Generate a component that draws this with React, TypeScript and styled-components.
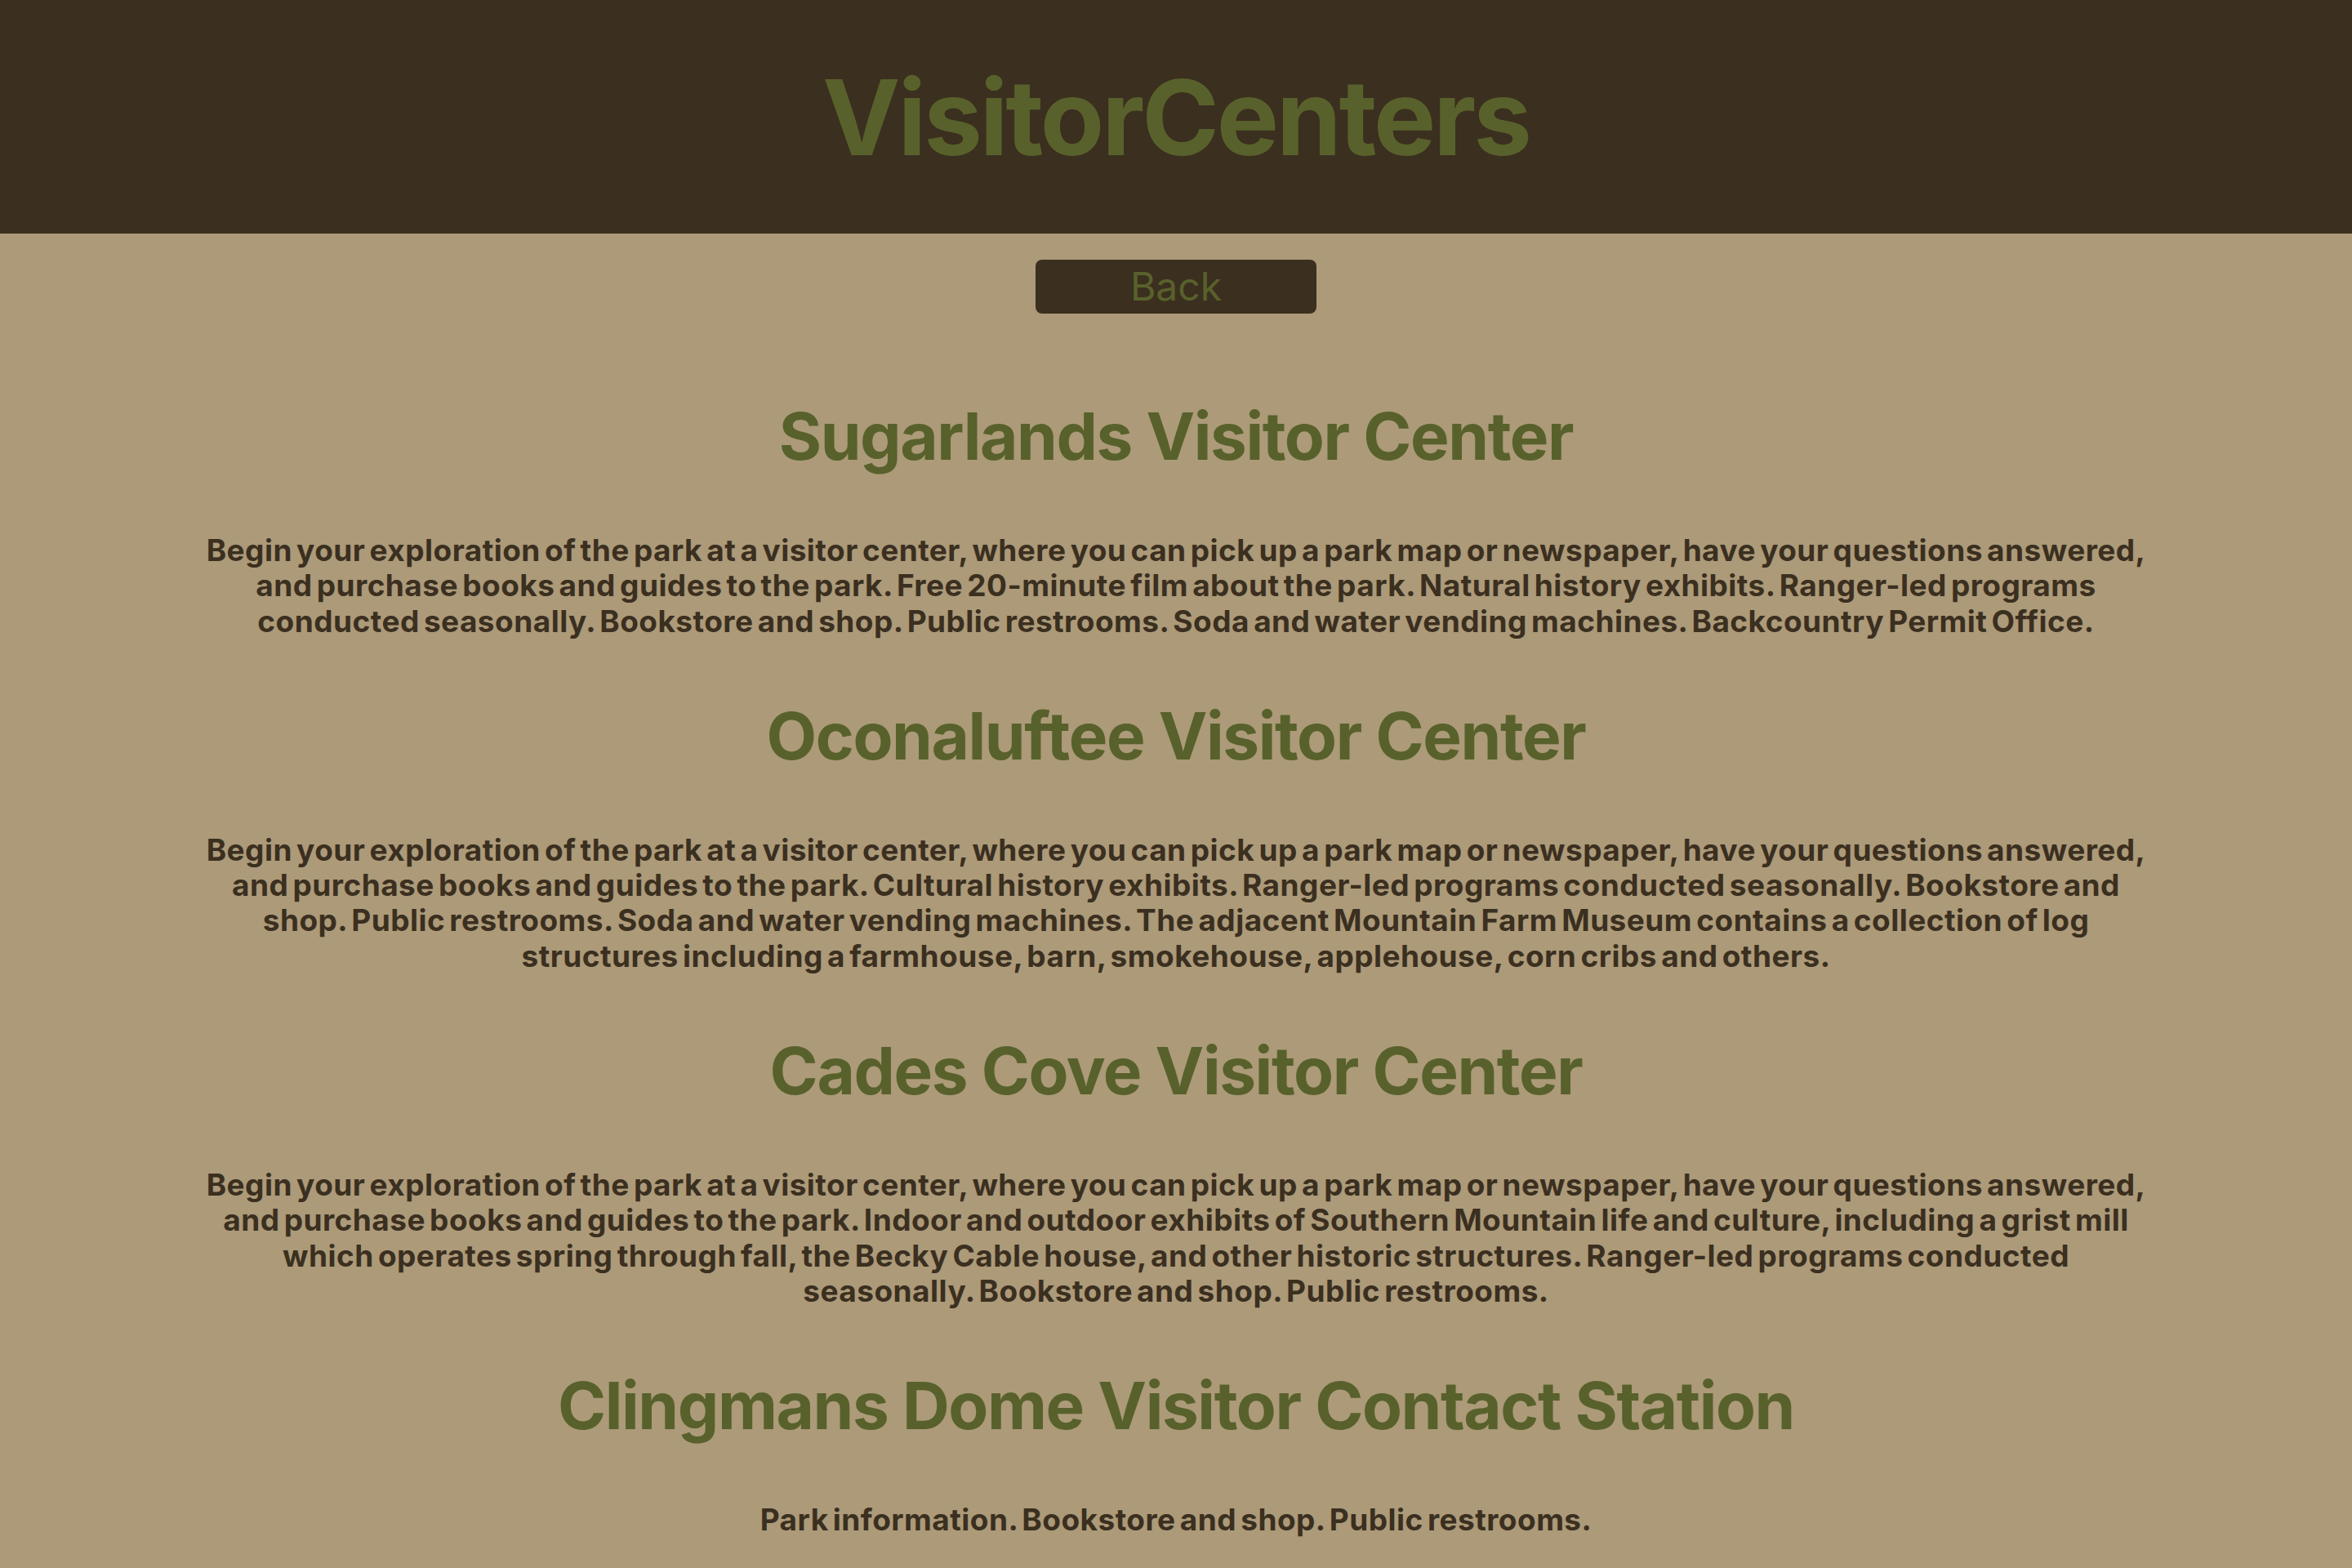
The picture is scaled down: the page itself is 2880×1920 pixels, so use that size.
import React from "react";
import styled, { createGlobalStyle } from "styled-components";

const GlobalStyle = createGlobalStyle`
  html, body {
    margin: 0;
    padding: 0;
    background: #ac9a79;
  }
  body {
    font-family: Inter, "Noto Sans", sans-serif;
  }
`;

const Page = styled.div`
  min-height: 1920px;
  background: #ac9a79;
  display: flex;
  flex-direction: column;
  align-items: center;
`;

const Header = styled.header`
  width: 100%;
  height: 286px;
  background: #3b2f1f;
  display: flex;
  align-items: center;
  justify-content: center;
`;

const Title = styled.h1`
  margin: 0;
  font-size: 128px;
  font-weight: 700;
  color: #58612b;
  letter-spacing: -3.1px;
`;

const BackButton = styled.button`
  margin-top: 32px;
  width: 344px;
  height: 66px;
  border: none;
  border-radius: 8px;
  background: #3b2f1f;
  color: #58612b;
  font-family: Inter, "Noto Sans", sans-serif;
  font-size: 48px;
  font-weight: 400;
  line-height: 1;
  cursor: pointer;
`;

const List = styled.main`
  width: 2390px;
  text-align: center;
  padding-top: 31px;
`;

const Name = styled.h2`
  margin: 70px 0;
  font-size: 80px;
  font-weight: 700;
  letter-spacing: -1.4px;
  color: #58612b;
`;

const Description = styled.p`
  margin: 36px 0;
  font-size: 37px;
  line-height: 43.3px;
  font-weight: 700;
  letter-spacing: 0.46px;
  word-spacing: -4px;
  color: #3b2f1f;
`;

const centers = [
  {
    name: "Sugarlands Visitor Center",
    text: "Begin your exploration of the park at a visitor center, where you can pick up a park map or newspaper, have your questions answered, and purchase books and guides to the park. Free 20-minute film about the park. Natural history exhibits. Ranger-led programs conducted seasonally. Bookstore and shop. Public restrooms. Soda and water vending machines. Backcountry Permit Office.",
  },
  {
    name: "Oconaluftee Visitor Center",
    text: "Begin your exploration of the park at a visitor center, where you can pick up a park map or newspaper, have your questions answered, and purchase books and guides to the park. Cultural history exhibits. Ranger-led programs conducted seasonally. Bookstore and shop. Public restrooms. Soda and water vending machines. The adjacent Mountain Farm Museum contains a collection of log structures including a farmhouse, barn, smokehouse, applehouse, corn cribs and others.",
  },
  {
    name: "Cades Cove Visitor Center",
    text: "Begin your exploration of the park at a visitor center, where you can pick up a park map or newspaper, have your questions answered, and purchase books and guides to the park. Indoor and outdoor exhibits of Southern Mountain life and culture, including a grist mill which operates spring through fall, the Becky Cable house, and other historic structures. Ranger-led programs conducted seasonally. Bookstore and shop. Public restrooms.",
  },
  {
    name: "Clingmans Dome Visitor Contact Station",
    text: "Park information. Bookstore and shop. Public restrooms.",
  },
];

export default function App() {
  return (
    <>
      <GlobalStyle />
      <Page>
        <Header>
          <Title>VisitorCenters</Title>
        </Header>
        <BackButton>Back</BackButton>
        <List>
          {centers.map((c) => (
            <React.Fragment key={c.name}>
              <Name>{c.name}</Name>
              <Description>{c.text}</Description>
            </React.Fragment>
          ))}
        </List>
      </Page>
    </>
  );
}
